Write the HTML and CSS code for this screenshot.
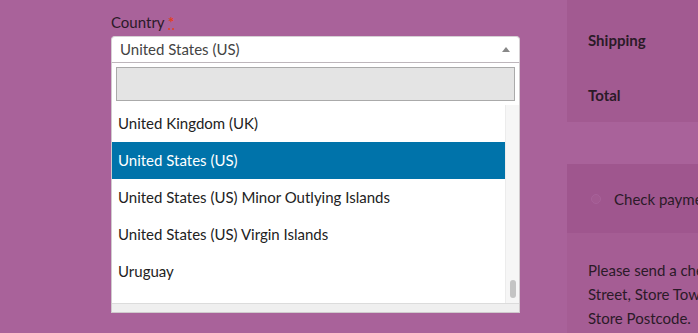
FILE: index.html
```html
<!DOCTYPE html>
<html>
<head>
<meta charset="utf-8">
<link rel="stylesheet" href="styles.css">
</head>
<body>
<div class="page">
  <div class="form-col">
    <label class="field-label">Country <abbr class="required" title="required">*</abbr></label>
    <div class="select">
      <span class="select-value">United States (US)</span>
      <span class="select-arrow"></span>
    </div>
    <div class="dropdown">
      <div class="search-wrap"><div class="search"></div></div>
      <div class="list-wrap">
        <ul class="options">
          <li class="option">United Kingdom (UK)</li>
          <li class="option selected">United States (US)</li>
          <li class="option">United States (US) Minor Outlying Islands</li>
          <li class="option">United States (US) Virgin Islands</li>
          <li class="option">Uruguay</li>
          <li class="option">Uzbekistan</li>
        </ul>
        <div class="scrollbar"><div class="thumb"></div></div>
      </div>
      <div class="dropdown-foot"></div>
    </div>
  </div>
  <div class="side-col">
    <div class="totals">
      <div class="total-row">Shipping</div>
      <div class="total-row">Total</div>
    </div>
    <div class="payment">
      <div class="method"><span class="radio"></span><span>Check payments</span></div>
      <div class="method-box">Please send a check to Store Name, Store<br>Street, Store Town, Store State / County,<br>Store Postcode.</div>
    </div>
  </div>
</div>
</body>
</html>
```

FILE: styles.css
```css
* { box-sizing: border-box; }
html, body { margin: 0; padding: 0; }
body {
  background: #a9629a;
  font-family: Lato, "Noto Sans", sans-serif;
  font-size: 15px;
  color: #2b1a28;
  width: 698px;
  height: 333px;
  overflow: hidden;
}
.page {
  display: flex;
  align-items: flex-start;
  width: 1000px;
}
.form-col {
  margin-left: 111px;
  width: 409px;
  flex-shrink: 0;
  padding-top: 10px;
  display: flex;
  flex-direction: column;
}
.field-label {
  line-height: 24px;
  height: 26px;
  color: #2b1a28;
}
.required {
  color: #e2401c;
  text-decoration: underline dotted;
  font-weight: bold;
  border: 0;
}
.select {
  height: 27px;
  background: #fff;
  border: 1px solid #d6d0d4;
  border-bottom-color: #bdb6bb;
  border-radius: 4px 4px 0 0;
  display: flex;
  align-items: center;
  justify-content: space-between;
  padding: 0 8px 0 8px;
}
.select-value {
  color: #444;
  line-height: 25px;
}
.select-arrow {
  width: 0;
  height: 0;
  border-left: 4px solid transparent;
  border-right: 4px solid transparent;
  border-bottom: 5px solid #888;
  margin-right: 1px;
}
.dropdown {
  background: #fff;
  border: 1px solid #d0cacd;
  border-top: 0;
  display: flex;
  flex-direction: column;
}
.search-wrap {
  padding: 4px;
}
.search {
  height: 34px;
  background: #e4e4e4;
  border: 1px solid #aaa;
}
.list-wrap {
  display: flex;
  height: 198px;
  overflow: hidden;
}
.options {
  list-style: none;
  margin: 0;
  padding: 0;
  flex: 1;
}
.option {
  height: 37px;
  line-height: 37px;
  padding-left: 6px;
  color: #222;
  white-space: nowrap;
}
.option.selected {
  background: #0073aa;
  color: #fff;
}
.scrollbar {
  width: 14px;
  background: #f6f6f6;
  border-left: 1px solid #ececec;
  display: flex;
  justify-content: center;
}
.thumb {
  width: 6px;
  height: 18px;
  margin-top: 175px;
  background: #c4c4c4;
  border-radius: 3px;
}
.dropdown-foot {
  height: 9px;
  background: #efefef;
  border-top: 1px solid #dcdcdc;
}
.side-col {
  margin-left: 47px;
  width: 330px;
  flex-shrink: 0;
  display: flex;
  flex-direction: column;
}
.totals {
  background: #a25a91;
  height: 122px;
  padding: 28px 21px 0;
  display: flex;
  flex-direction: column;
  gap: 31px;
  font-weight: bold;
}
.total-row {
  line-height: 24px;
}
.payment {
  margin-top: 42px;
  display: flex;
  flex-direction: column;
}
.method {
  background: #9f568e;
  height: 69px;
  padding-left: 24px;
  display: flex;
  align-items: center;
  gap: 13px;
}
.radio {
  width: 10px;
  height: 10px;
  border-radius: 50%;
  border: 1px solid #a7629a;
  background: #a25a91;
}
.method-box {
  background: #a55d94;
  padding: 25px 21px 20px 21px;
  line-height: 24px;
  white-space: nowrap;
}
```
